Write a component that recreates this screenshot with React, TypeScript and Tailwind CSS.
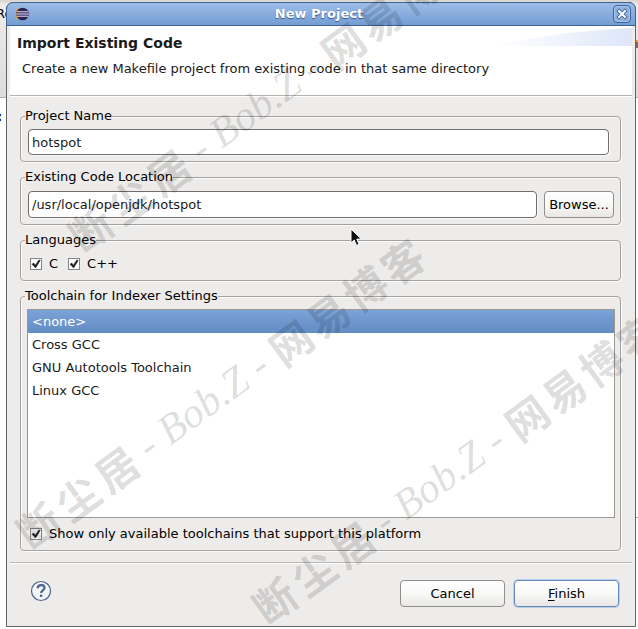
import type { ReactNode } from 'react';

function Group({ title, className, children }: { title: string; className: string; children: ReactNode }) {
  return (
    <fieldset className="rounded-[4px] border border-[#a3a2a0] shadow-[1px_1px_0_#fbfbfb,inset_1px_1px_0_#fbfbfb]">
      <legend className="ml-1 h-4 bg-[#edeceb] leading-4">{title}</legend>
      <div className={className}>{children}</div>
    </fieldset>
  );
}

function Check({ label }: { label: string }) {
  return (
    <label className="flex h-4 items-center gap-[7px] leading-4">
      <span className="relative block size-3">
        <input
          type="checkbox"
          defaultChecked
          className="peer block size-3 appearance-none border border-[#858585] bg-white"
        />
        <svg viewBox="0 0 12 12" className="pointer-events-none absolute inset-0 hidden size-3 peer-checked:block">
          <path d="M2 6.2 3.8 5l1.5 2.3L8.8 2l1.4.4L5.6 10z" fill="#1b1b1b" stroke="#1b1b1b" strokeWidth=".5" />
        </svg>
      </span>
      {label}
    </label>
  );
}

function Watermark({ className }: { className: string }) {
  return (
    <div
      aria-hidden="true"
      className={`pointer-events-none absolute flex h-12 origin-left -rotate-36 items-center whitespace-nowrap font-['Noto_Sans_CJK_SC',sans-serif] text-[42px] leading-[48px] font-bold text-black/14 ${className}`}
    >
      <span className="flex gap-1.5">
        <span>断</span>
        <span>尘</span>
        <span>居</span>
      </span>
      <span className="w-9 text-center font-['Liberation_Serif',serif] font-normal italic">-</span>
      <span className="font-['Liberation_Serif',serif] font-normal italic">Bob.Z</span>
      <span className="w-9 text-center font-['Liberation_Serif',serif] font-normal italic">-</span>
      <span className="flex gap-1">
        <span>网</span>
        <span>易</span>
        <span>博</span>
        <span>客</span>
      </span>
    </div>
  );
}

const field =
  'min-w-0 flex-1 rounded-[4px] border border-[#6f6e6c] bg-white px-[3px] text-[#1a1a1a] shadow-[1px_1px_0_#fafafa] outline-none';
const button =
  'rounded-[4px] border bg-linear-to-b from-white via-[#f8f8f7] to-[#e9e8e6] text-center text-black';
const option =
  'h-[23px] px-1 pt-1 pb-0 checked:bg-linear-to-b checked:from-[#7ba3d8] checked:to-[#648cc5] checked:text-white';

export default function App() {
  return (
    <div className="relative min-h-screen overflow-hidden bg-white font-['DejaVu_Sans',sans-serif] text-[13px] leading-4 text-black">
      <div className="absolute inset-x-0 top-0 h-[98px] border-b border-[#b0afad] bg-linear-to-b from-[#d8d4cc] via-[#edeceb] via-5% to-[#dddcda]" />
      <div className="absolute top-1.5 -left-1">Re</div>
      <div className="absolute top-[109px] -left-[3px] font-bold">:</div>
      <div className="absolute top-10 right-0 h-2 w-[3px] border-t-2 border-[#eaa13a] bg-[#7a6a68]" />
      <div className="absolute top-[517px] right-0 h-px w-[3px] bg-[#aaa]" />

      <main className="relative mt-0.5 mr-0.5 ml-1.5 rounded-t-[7px] border border-[#5f6468] bg-[#edeceb]">
        <header className="-mx-px -mt-px flex h-6 items-center rounded-t-[7px] border border-[#3f6396] bg-linear-to-b from-[#9dbde8] to-[#739dd2] px-1">
          <svg viewBox="0 0 14 14" className="ml-1 size-3.5">
            <circle cx="6.2" cy="7" r="6.2" fill="#f09a2c" />
            <circle cx="7.6" cy="7" r="6.3" fill="#2c2358" />
            <path d="M2 4.8h11.2M1.3 7h12.5M2 9.2h11.2" stroke="#e8edf7" strokeWidth="1" />
          </svg>
          <h1 className="flex-1 pr-1 text-center font-bold text-white [text-shadow:0_1px_1px_#31588f]">New Project</h1>
          <button
            aria-label="Close"
            className="flex size-[18px] items-center justify-center rounded-[4px] border border-[#3f6396] bg-[#8eb1df] shadow-[inset_0_0_0_1px_#a6c3ea]"
          >
            <svg viewBox="0 0 12 12" className="size-3">
              <path d="m3 3 6 6m0-6L3 9" stroke="#3f6396" strokeWidth="3.8" strokeLinecap="square" />
              <path d="m3 3 6 6m0-6L3 9" stroke="#fff" strokeWidth="2" strokeLinecap="square" />
            </svg>
          </button>
        </header>

        <section className="relative mr-[3px] ml-[3px] h-[70px] border-b border-[#b4b3b1] bg-white px-[7px] pt-[9px] text-[#1a1a1a] shadow-[0_1px_0_#fff]">
          <svg viewBox="0 0 140 20" preserveAspectRatio="none" className="absolute top-0 right-0 h-5 w-[140px]">
            <defs>
              <linearGradient id="banner">
                <stop offset="0" stopColor="#fff" />
                <stop offset="0.4" stopColor="#f3f6fd" />
                <stop offset="1" stopColor="#dde5f9" />
              </linearGradient>
            </defs>
            <path d="M0 20Q60 6 140 2v18z" fill="url(#banner)" />
          </svg>
          <h2 className="relative text-sm leading-4 font-bold">Import Existing Code</h2>
          <p className="relative mt-2.5 ml-[5px]">Create a new Makefile project from existing code in that same directory</p>
        </section>

        <form className="flex flex-col gap-[7px] pt-3 pr-3.5 pb-[11px] pl-[13px]" onSubmit={(e) => e.preventDefault()}>
          <Group title="Project Name" className="flex pt-[5px] pr-[11px] pb-1.5 pl-[7px]">
            <input aria-label="Project Name" defaultValue="hotspot" className={`${field} h-[26px]`} />
          </Group>
          <Group title="Existing Code Location" className="flex gap-[7px] pt-1.5 pr-1.5 pb-1.5 pl-[7px]">
            <input aria-label="Existing Code Location" defaultValue="/usr/local/openjdk/hotspot" className={`${field} h-[27px]`} />
            <button type="button" className={`${button} h-[27px] w-[70px] border-[#8f8e8c]`}>
              Browse...
            </button>
          </Group>
          <Group title="Languages" className="flex gap-2.5 px-[9px] py-2">
            <Check label="C" />
            <Check label="C++" />
          </Group>
          <Group title="Toolchain for Indexer Settings" className="pt-[5px] pr-[5px] pb-2 pl-1.5">
            <select
              aria-label="Toolchain for Indexer Settings"
              size={9}
              defaultValue="none"
              className="block h-[209px] w-full overflow-hidden border border-[#9b9894] bg-white text-[#1a1a1a] outline-none"
            >
              <option value="none" className={option}>{'<none>'}</option>
              <option value="cross" className={option}>Cross GCC</option>
              <option value="gnu" className={option}>GNU Autotools Toolchain</option>
              <option value="linux" className={option}>Linux GCC</option>
            </select>
            <div className="mt-2 ml-[3px]">
              <Check label="Show only available toolchains that support this platform" />
            </div>
          </Group>
        </form>

        <footer className="mx-[3px] flex items-start gap-[9px] border-t border-[#b9b8b6] pt-[17px] pr-[13px] pb-[19px] pl-5 shadow-[inset_0_1px_0_#fff]">
          <button aria-label="Help" className="mr-auto size-[22px]">
            <svg viewBox="0 0 22 22" className="size-[22px]" fill="none">
              <circle cx="11" cy="11" r="9.5" fill="#f4f6f9" stroke="#4a648c" strokeWidth="1.2" />
              <path d="M7.6 8.2C7.8 4 14.8 4 14.5 8c-.2 2.3-3.4 2.4-3.4 5" stroke="#4a648c" strokeWidth="2.3" />
              <path d="M9.9 14.6h2.4v2.3H9.9z" fill="#4a648c" />
            </svg>
          </button>
          <button className={`${button} h-[27px] w-[105px] border-[#8f8e8c]`}>Cancel</button>
          <button className={`${button} h-[27px] w-[105px] border-[#6288bd] shadow-[0_0_0_1px_#bdcfe7]`}>
            <span className="underline underline-offset-2">F</span>inish
          </button>
        </footer>
      </main>

      <svg viewBox="0 0 14 20" className="absolute top-[228px] left-[350px] h-5 w-3.5">
        <path
          d="M1 1v14l3.2-3 2.3 5.4 2.6-1.1-2.3-5.2h4.6z"
          fill="#111"
          stroke="#fff"
          strokeWidth="1"
          strokeLinejoin="round"
        />
      </svg>

      <Watermark className="top-[216px] left-[73px]" />
      <Watermark className="top-[513px] left-[21px]" />
      <Watermark className="top-[588px] left-[257px]" />
    </div>
  );
}
